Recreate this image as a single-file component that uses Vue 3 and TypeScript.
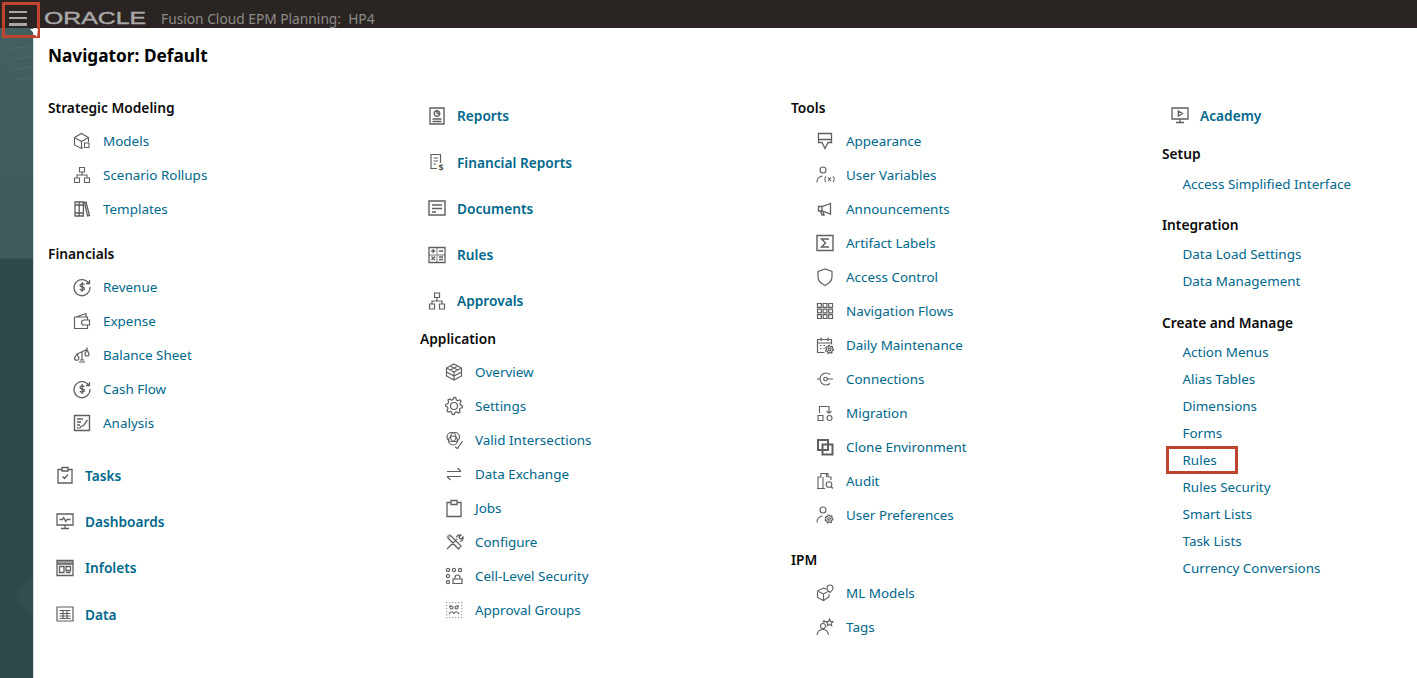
<script setup lang="ts">
type Icon = { d: string; f?: string; t?: string; w?: number }
const c = (x: number, y: number, r: number) => `M${x - r} ${y}a${r} ${r} 0 1 0 ${2 * r} 0a${r} ${r} 0 1 0 ${-2 * r} 0`
const r = (x: number, y: number, w: number, h: number) => `M${x} ${y}h${w}v${h}h${-w}z`
const gridDots = (xs: number[], ys: number[], s: number) => xs.flatMap((x) => ys.map((y) => r(x, y, s, s))).join('')
const gear = (cx: number, cy: number, outer: number, inner: number, teeth: number) => {
  const pts: string[] = []
  const step = (Math.PI * 2) / (teeth * 4)
  for (let i = 0; i < teeth * 4; i++) {
    const rad = i % 4 < 2 ? outer : inner
    const a = i * step
    pts.push(`${(cx + rad * Math.cos(a)).toFixed(2)} ${(cy + rad * Math.sin(a)).toFixed(2)}`)
  }
  return 'M' + pts.join('L') + 'z'
}

const icons: Record<string, Icon> = {
  models: { d: 'M2.500 6.500 9.500 2.500l7 4v4.500M2.500 6.500v7.500l7 3.500 1.500-.7M2.500 6.500l7 4 7-4M9.500 10.500v7' + r(12.500, 12, 4.500, 4.500) },
  rollups: { d: r(7.500, 2.500, 5, 4.500) + r(2.500, 13, 5, 4.500) + r(12.500, 13, 5, 4.500) + 'M10 7v3M5 13v-3h10v3' },
  templates: { d: r(3, 3, 4.200, 14) + r(7.200, 3, 4.200, 14) + 'M3 6h8.400M3 14h8.400M12.500 3.500l1.500-.4L17.500 16.500l-2 .5z', w: 1.300 },
  revenue: { d: 'M16.500 6A8 8 0 1 0 18 10M17.500 3v3.500H14M12.500 7.500c-.6-.8-4.500-1.200-4.500.9 0 2.200 4.500 1 4.500 3.200 0 1.900-3.800 1.700-4.700.7M10.200 5v10', w: 1.300 },
  expense: { d: 'M14 6V2.500L4 6M2.500 6h13v3M15.500 14v3.500h-13V6M12 9h5.500v5H12a2.500 2.500 0 0 1 0-5z', w: 1.200 },
  balance: { d: 'M5 9 15 4.500M10 6.500V15M7 17h6M8 15h4M15 4.500l-2 4.500a2 2 0 0 0 4 0zM5 9l-2.500 4a2.200 2.200 0 0 0 4.500 0zM15 2.500v2', w: 1.200 },
  analysis: { d: r(2.500, 2.500, 15, 15) + 'M5 6h6M5 9h4M5 12h3M7.500 15.500c2.500-5 3-1 4.500-3.500s2-3 3.500-5M5 15h1.500' , w: 1.400 },
  tasks: { d: 'M7 4.500H3v13.500h14V4.500h-4M7 2.500h6v3.500H7zM7.500 11.500l2 2 3.500-4', w: 1.300 },
  dashboards: { d: r(2, 3, 16, 11) + 'M10 14v3M6 17.500h8M4.500 8.500h3l1.200-2 2 4 1.300-2h3.500', w: 1.300 },
  infolets: { d: r(2, 2.500, 16, 15) + 'M2 6h16' + r(4.500, 8.500, 4.500, 6) + r(11, 8.500, 4.500, 4) + 'M11 14.500h4.500', f: r(2, 2.500, 16, 3.500), w: 1.300 },
  data: { d: r(2, 3, 16, 14) + 'M4.500 6.500h11M4.500 9.500h11M4.500 12h11M4.500 14.500h11M8 7v7.500M12 7v7.500', w: 1.200 },
  reports: { d: r(3, 2, 14, 16) + 'M5.500 13h9M5.500 15.500h9' + c(10, 7.500, 2.800) + 'M10 7.500V4.700M10 7.500h2.800', w: 1.400 },
  financial: { d: 'M13.500 11V2.500H4V16.500h6M6.500 6h4.500M6.500 9h4.500M6.500 12h2.500', t: '$', w: 1.200 },
  documents: { d: r(2, 3, 16, 14) + 'M5 7h10M5 10.500h10M5 14h4', w: 1.400 },
  rules: { d: r(2, 2.500, 16, 15) + 'M4.200 6h4M6.200 4v4M12 6h4M4.500 11.500l3.500 3.500M8 11.500 4.500 15M12 12h4M12 14.500h4', f: 'M9.300 2.500h1.400v15H9.300zM2 9.300h16v1.400H2z', w: 1.300 },
  approvals: { d: r(7.500, 2, 5, 4.500) + r(2.500, 13, 5, 5) + r(12.500, 13, 5, 5) + 'M10 6.500v3.500M5 13v-3h10v3', w: 1.200 },
  overview: { d: 'M10 2l7.500 4v8L10 18l-7.500-4V6zM2.500 6l7.500 4 7.500-4M10 10v8M6.200 4l7.500 4M13.800 4 6.300 8M2.500 10l7.500 4 7.500-4', w: 1.200 },
  settings: { d: c(10, 10, 3.500) + gear(10, 10, 8.500, 6.500, 8), w: 1.200 },
  valid: { d: c(7.500, 7, 4.500) + c(11, 7, 4.500) + c(9, 10.500, 4.500) + 'M11 17l2.500 1.500L18.500 11', w: 1.200 },
  exchange: { d: 'M3 7.500h14M13.500 4l3.500 3.500M17 12.500H3M6.500 16 3 12.500', w: 1.100 },
  jobs: { d: 'M7 4.500H3v14h14v-14h-4M7 2.500h6v4H7z', w: 1.300 },
  configure: { d: 'M3 17 13 7M6 3l11 11-2.500 3L4 6M12.500 5.500c.5-2 2.500-3 4.500-2.500l-2 2 .5 1.500 1.500.5 2-2c.5 2-.5 4-3 4.500', f: 'M2 5l3-3 2 2-3 3z', w: 1.200 },
  cell: { d: c(4, 4, 1.600) + c(10, 4, 1.600) + c(16, 4, 1.600) + c(4, 10, 1.600) + c(4, 16, 1.600) + r(9, 13, 9, 4.500) + 'M11 13v-1.500a2.500 2.500 0 0 1 5 0V13', w: 1.200 },
  groups: { d: 'M7.500 9a1.500 1.500 0 1 1 .01 0M12.500 9a1.500 1.500 0 1 1 .01 0M5 14c1-3 4.500-3 5 0 .5-3 4-3 5 0M5 6h3M12 6h3', f: gridDots([2, 5, 8, 11, 14, 17], [2, 17], 1.300) + gridDots([2, 17], [5, 8, 11, 14], 1.300), w: 1.100 },
  appearance: { d: 'M3.500 2.500h13v9h-3.500l-3 6-3-6H3.500zM3.500 8.500h13', w: 1.300 },
  uservars: { d: c(8, 5, 3) + 'M2 17.500c0-3.500 2-6 5.500-6.500M11 11.500c-1.500 1.500-1.500 4 0 5.500M18 11.500c1.500 1.500 1.500 4 0 5.500M13 12.500l3 3.500M16 12.500l-3 3.500', w: 1.100 },
  announce: { d: 'M15.500 4.500 7 7.500H3.500V12H7l8.500 3zM7 7.500V12M5.500 12l1.500 4h2L8 13', w: 1.300 },
  labels: { d: r(2, 2.500, 16, 15) + 'M14 6H6.500l4 4-4 4H14', w: 1.400 },
  access: { d: 'M10 2 3 4.500V10c0 4 3 6.500 7 8.500 4-2 7-4.500 7-8.500V4.500z', w: 1.200 },
  flows: { d: r(2.500, 2.500, 3.800, 3.800) + r(8.100, 2.500, 3.800, 3.800) + r(13.700, 2.500, 3.800, 3.800) + r(2.500, 8.100, 3.800, 3.800) + r(8.100, 8.100, 3.800, 3.800) + r(13.700, 8.100, 3.800, 3.800) + r(2.500, 13.700, 3.800, 3.800) + r(8.100, 13.700, 3.800, 3.800) + r(13.700, 13.700, 3.800, 3.800), w: 1.200 },
  maintenance: { d: 'M9.500 17.500H2.500V4.500h14V9.500M2.500 8h14M6 2.500v3.500M13 2.500v3.500M5 10.500h1.500M8.500 10.500h1.500M5 13.500h1.500M8.500 13.500h1' + c(14.500, 14.500, 1.300) + gear(14.500, 14.500, 4, 3, 7), w: 1.200 },
  connections: { d: c(10.500, 10, 1.800) + 'M15 5.500a6 6 0 1 0 0 9M2 10h3.500M12.500 10h5.500', w: 1.100 },
  migration: { d: r(3, 12.500, 5, 5) + c(14.500, 15, 2.500) + 'M4.500 10V3.500h9.500v6.500M11.500 7.800l2.500 2.500 2.500-2.500', w: 1.100 },
  clone: { d: r(3, 3, 10, 10) + r(7.500, 7.500, 10, 10), w: 2 },
  audit: { d: 'M3 17V6h3V2.500h7V6h3v3M8 6v11M2 17.500h8M11.500 3v3' + c(14, 13.500, 2.800) + 'M16 15.500l2 2', w: 1.100 },
  userprefs: { d: c(8, 5, 3) + 'M2 17.500c0-3.500 2-6 5.500-6.500' + c(14, 14, 1.300) + gear(14, 14, 4, 3, 7), w: 1.100 },
  mlmodels: { d: 'M2.500 8l6-3 3 1.500M2.500 8v6.500l6 3 5.500-3.500v-3M2.500 8l6 3 5.500-3M8.500 11v6.500M15 2a3 3 0 0 1 3 3c0 2-3 4.500-3 4.500S12 7 12 5a3 3 0 0 1 3-3z', w: 1.100 },
  tags: { d: c(8, 9, 2.500) + 'M2 18c.5-3.500 2.500-5.500 6-5.500s5 1.800 5.500 5.500M14.500 2l1 2.400 2.500.3-1.800 1.700.5 2.400-2.200-1.200-2.200 1.200.5-2.400L11 4.700l2.500-.3zM9 3v3M7.500 4.500h3', w: 1.100 },
  academy: { d: r(2, 3, 16, 11) + 'M10 14v3M6 17.500h8M8.300 6l4.200 2.500-4.200 2.500z', w: 1.300 }
}

type Item = { label: string; icon?: string; boxed?: boolean }
type Block =
  | { kind: 'group'; title: string; items: Item[] }
  | { kind: 'top'; items: Item[] }
  | { kind: 'plain'; title: string; items: Item[] }

const columns: { key: string; blocks: Block[] }[] = [
  {
    key: 'one',
    blocks: [
      { kind: 'group', title: 'Strategic Modeling', items: [
        { label: 'Models', icon: 'models' }, { label: 'Scenario Rollups', icon: 'rollups' }, { label: 'Templates', icon: 'templates' }] },
      { kind: 'group', title: 'Financials', items: [
        { label: 'Revenue', icon: 'revenue' }, { label: 'Expense', icon: 'expense' }, { label: 'Balance Sheet', icon: 'balance' },
        { label: 'Cash Flow', icon: 'revenue' }, { label: 'Analysis', icon: 'analysis' }] },
      { kind: 'top', items: [
        { label: 'Tasks', icon: 'tasks' }, { label: 'Dashboards', icon: 'dashboards' }, { label: 'Infolets', icon: 'infolets' }, { label: 'Data', icon: 'data' }] }
    ]
  },
  {
    key: 'two',
    blocks: [
      { kind: 'top', items: [
        { label: 'Reports', icon: 'reports' }, { label: 'Financial Reports', icon: 'financial' }, { label: 'Documents', icon: 'documents' },
        { label: 'Rules', icon: 'rules' }, { label: 'Approvals', icon: 'approvals' }] },
      { kind: 'group', title: 'Application', items: [
        { label: 'Overview', icon: 'overview' }, { label: 'Settings', icon: 'settings' }, { label: 'Valid Intersections', icon: 'valid' },
        { label: 'Data Exchange', icon: 'exchange' }, { label: 'Jobs', icon: 'jobs' }, { label: 'Configure', icon: 'configure' },
        { label: 'Cell-Level Security', icon: 'cell' }, { label: 'Approval Groups', icon: 'groups' }] }
    ]
  },
  {
    key: 'three',
    blocks: [
      { kind: 'group', title: 'Tools', items: [
        { label: 'Appearance', icon: 'appearance' }, { label: 'User Variables', icon: 'uservars' }, { label: 'Announcements', icon: 'announce' },
        { label: 'Artifact Labels', icon: 'labels' }, { label: 'Access Control', icon: 'access' }, { label: 'Navigation Flows', icon: 'flows' },
        { label: 'Daily Maintenance', icon: 'maintenance' }, { label: 'Connections', icon: 'connections' }, { label: 'Migration', icon: 'migration' },
        { label: 'Clone Environment', icon: 'clone' }, { label: 'Audit', icon: 'audit' }, { label: 'User Preferences', icon: 'userprefs' }] },
      { kind: 'group', title: 'IPM', items: [{ label: 'ML Models', icon: 'mlmodels' }, { label: 'Tags', icon: 'tags' }] }
    ]
  },
  {
    key: 'four',
    blocks: [
      { kind: 'top', items: [{ label: 'Academy', icon: 'academy' }] },
      { kind: 'plain', title: 'Setup', items: [{ label: 'Access Simplified Interface' }] },
      { kind: 'plain', title: 'Integration', items: [{ label: 'Data Load Settings' }, { label: 'Data Management' }] },
      { kind: 'plain', title: 'Create and Manage', items: [
        { label: 'Action Menus' }, { label: 'Alias Tables' }, { label: 'Dimensions' }, { label: 'Forms' }, { label: 'Rules', boxed: true },
        { label: 'Rules Security' }, { label: 'Smart Lists' }, { label: 'Task Lists' }, { label: 'Currency Conversions' }] }
    ]
  }
]
</script>

<template>
  <div class="page">
    <header class="topbar">
      <button class="menu" type="button" aria-label="Menu">
        <span></span><span></span><span></span>
      </button>
      <svg class="logo" width="108" height="20" viewBox="0 0 108 20" aria-label="Oracle">
        <text x="0" y="16" textLength="102" lengthAdjust="spacingAndGlyphs">ORACLE</text>
      </svg>
      <span class="product">Fusion Cloud EPM Planning:&nbsp; HP4</span>
    </header>

    <div class="body">
      <aside class="strip">
        <svg class="strip-art" width="33" height="650" viewBox="0 0 33 650">
          <path d="M10 22 33 17M12 32 33 28M14 42 33 38M19 52 33 49" stroke="#4f6b6c" stroke-width="1" fill="none" />
          <path d="M33 548 15 568 33 588z" fill="#334e4f" />
        </svg>
      </aside>

      <main class="panel">
        <h1 class="title">Navigator: Default</h1>
        <div class="columns">
          <section v-for="col in columns" :key="col.key" class="column" :class="col.key">
            <div v-for="(block, i) in col.blocks" :key="i" class="block" :class="block.kind">
              <h2 v-if="block.kind !== 'top'" class="heading">{{ block.title }}</h2>
              <a v-for="item in block.items" :key="item.label" class="link">
                <svg v-if="item.icon" class="icon" width="20" height="20" viewBox="0 0 20 20">
                  <path v-if="icons[item.icon].f" :d="icons[item.icon].f" class="fill" />
                  <path :d="icons[item.icon].d" class="stroke" :stroke-width="icons[item.icon].w ?? 1.100" />
                  <text v-if="icons[item.icon].t" x="11.500" y="18.500" class="glyph">{{ icons[item.icon].t }}</text>
                </svg>
                <span class="label">{{ item.label }}</span>
                <span v-if="item.boxed" class="callout"></span>
              </a>
            </div>
          </section>
        </div>
      </main>
    </div>

    <span class="callout-menu"></span>
    <svg class="pointer" width="10" height="11" viewBox="0 0 10 11"><path d="M0 0 8 0 7 8z" fill="#fff" /></svg>
  </div>
</template>

<style>
html, body { margin: 0; background: #fff; }
</style>

<style scoped>
.page {
  position: relative;
  width: 1417px;
  height: 678px;
  overflow: hidden;
  font-family: "Noto Sans", "Open Sans", sans-serif;
  display: flex;
  flex-direction: column;
  background: #fff;
}
.topbar {
  height: 28px;
  flex: none;
  background: #2a2522;
  display: flex;
  align-items: center;
  padding: 8px 0 0 9px;
  box-sizing: border-box;
}
.menu {
  width: 18px;
  height: 15px;
  padding: 0;
  margin: 0;
  border: 0;
  background: none;
  display: flex;
  flex-direction: column;
  justify-content: space-between;
}
.menu span {
  display: block;
  height: 2.500px;
  background: #a8a8a8;
}
.logo { margin-left: 17px; flex: none; }
.logo text {
  font-family: "Liberation Sans", sans-serif;
  font-size: 17px;
  fill: #a9a9a9;
  stroke: #a9a9a9;
  stroke-width: 0.400px;
}
.product {
  margin-left: 9px;
  font-size: 13.750px;
  color: #8c8a88;
  white-space: nowrap;
}
.body { flex: 1; display: flex; min-height: 0; }
.strip {
  position: relative;
  width: 33px;
  flex: none;
  overflow: hidden;
  background: linear-gradient(#41605f 0, #3f5c5d 230px, #2f4a4b 231px, #2f4a4b 100%);
  border-right: 1px solid #cfdcdc;
}
.strip-art { position: absolute; top: 0; left: 0; }
.panel { flex: 1; padding-left: 14px; min-width: 0; }
.title {
  margin: 15px 0 0;
  height: 26px;
  line-height: 26px;
  font-size: 17.250px;
  font-weight: 700;
  color: #000;
}
.columns {
  display: grid;
  grid-template-columns: 372px 371px 371px 1fr;
  margin-top: 22px;
}
.block { display: flex; flex-direction: column; }
.heading {
  margin: 0;
  height: 32px;
  line-height: 34px;
  font-size: 13.750px;
  font-weight: 600;
  color: #0b0b0b;
}
.link {
  position: relative;
  display: flex;
  align-items: center;
  color: #00688c;
  font-size: 13.450px;
}
.group { margin-bottom: 12px; }
.group .link { height: 34px; padding: 1px 0 0 24px; box-sizing: border-box; }
.icon { flex: none; margin-right: 11px; }
.top .link { height: 46.250px; padding-left: 7px; font-weight: 600; font-size: 13.700px; }
.top .icon { margin-right: 10px; }
.stroke { fill: none; stroke: #5f5f5f; }
.fill { fill: #a5a5a5; }
.glyph { font-size: 9px; font-weight: 700; fill: #555; font-family: "Noto Sans", sans-serif; }
.two .top { margin-top: 1.700px; margin-bottom: -1.950px; }
.one .top { padding-top: 1px; }
.one .top .link:last-child { margin-top: 0.500px; }
.four .top { margin-top: 1px; margin-bottom: -1px; }
.four .top .link { padding-left: 8px; }
.plain .link { height: 27px; padding-left: 20.500px; }
.plain { margin-bottom: 11.500px; }
.plain .heading { margin-bottom: 0.500px; }
.top + .plain { margin-bottom: 10.500px; }
.top + .plain .heading { margin-bottom: 1.500px; }
.callout {
  position: absolute;
  left: 4px;
  top: -1px;
  width: 72px;
  height: 28px;
  box-sizing: border-box;
  border: 3px solid #c0432f;
}
.callout-menu {
  position: absolute;
  left: 2px;
  top: 2px;
  width: 38px;
  height: 36px;
  box-sizing: border-box;
  border: 3px solid #c0432f;
}
.pointer { position: absolute; left: 30px; top: 29px; }
</style>
